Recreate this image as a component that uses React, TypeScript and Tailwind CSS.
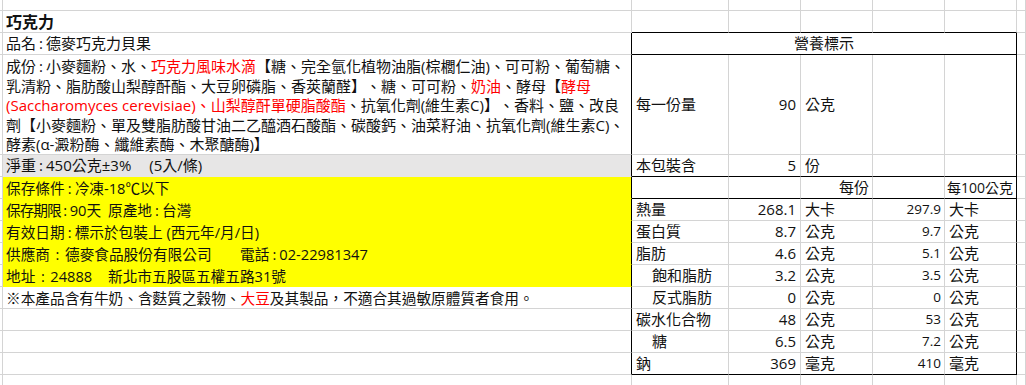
import React from "react";

const base =
  "border-r border-b border-[#d4d4d4] overflow-hidden whitespace-nowrap flex items-center";

const R = ({ children }: { children: React.ReactNode }) => (
  <span className="text-[#f00]">{children}</span>
);

/* narrow colon as rendered by the original font */
const C = () => <span className="inline-block w-[10px] text-center">:</span>;
/* full width colon */
const W = () => <span className="inline-block w-[15px] text-center">:</span>;

type Nut = [string, boolean, string, string, string, string];
const nutrients: Nut[] = [
  ["熱量", false, "268.1", "大卡", "297.9", "大卡"],
  ["蛋白質", false, "8.7", "公克", "9.7", "公克"],
  ["脂肪", false, "4.6", "公克", "5.1", "公克"],
  ["飽和脂肪", true, "3.2", "公克", "3.5", "公克"],
  ["反式脂肪", true, "0", "公克", "0", "公克"],
  ["碳水化合物", false, "48", "公克", "53", "公克"],
  ["糖", true, "6.5", "公克", "7.2", "公克"],
  ["鈉", false, "369", "毫克", "410", "毫克"],
];

const leftRows: { node: React.ReactNode; yellow: boolean }[] = [
  {
    node: (
      <>
        <span className="inline-block w-[102px]">
          <span className="tracking-[-1px]">保存期限</span>
          <span className="inline-block w-[9px] text-center">:</span>90天
        </span>
        原產地<C />台灣
      </>
    ),
    yellow: true,
  },
  {
    node: (
      <>
        有效日期<C />標示於包裝上 (西元年/月/日)
      </>
    ),
    yellow: true,
  },
  {
    node: (
      <>
        <span className="inline-block w-[234px]">
          供應商<W />德麥食品股份有限公司
        </span>
        電話<C />02-22981347
      </>
    ),
    yellow: true,
  },
  {
    node: (
      <>
        <span className="inline-block w-[102px]">
          地址<W />24888
        </span>
        新北市五股區五權五路31號
      </>
    ),
    yellow: true,
  },
  {
    node: (
      <>
        ※本產品含有牛奶、含麩質之穀物、<R>大豆</R>及其製品，不適合其過敏原體質者食用。
      </>
    ),
    yellow: false,
  },
  { node: null, yellow: false },
  { node: null, yellow: false },
  { node: null, yellow: false },
];

export default function App() {
  return (
    <div className="w-[1026px] h-[385px] overflow-hidden bg-white text-[#111] text-[15px] [text-spacing-trim:space-all] font-['Open_Sans','Noto_Sans_CJK_TC',sans-serif]">
      <div className="grid grid-cols-[3px_629px_97px_72px_72px_72px_72px_1fr] grid-rows-[11px_22px_22px_100px_repeat(11,22px)]">
        {/* Row 0 */}
        <div className={base} />
        <div className={base} />
        <div className={base} />
        <div className={base} />
        <div className={base} />
        <div className={base} />
        <div className={base} />
        <div className={base} />

        {/* Row 1 */}
        <div className={base} />
        <div className={`${base} pl-[3px] font-bold text-[16px]`}>巧克力</div>
        <div className={`${base} border-b-black`} />
        <div className={`${base} border-b-black`} />
        <div className={`${base} border-b-black`} />
        <div className={`${base} border-b-black`} />
        <div className={`${base} border-b-black`} />
        <div className={base} />

        {/* Row 2 */}
        <div className={base} />
        <div className={`${base} pl-[3px] border-r-black`}>
          品名<C />德麥巧克力貝果
        </div>
        <div
          className={`${base} col-span-5 justify-center border-b-black border-r-black`}
        >
          營養標示
        </div>
        <div className={base} />

        {/* Row 3 */}
        <div className={base} />
        <div
          className={`border-r border-b border-[#d4d4d4] border-r-black overflow-hidden whitespace-nowrap pl-[3px] pt-[2px] leading-[19.6px]`}
        >
          <div>
            成份<C />小麥麵粉、水、<R>巧克力風味水滴</R>【糖、完全氫化植物油脂(棕櫚仁油)、可可粉、葡萄糖、
          </div>
          <div>
            乳清粉、脂肪酸山梨醇酐酯、大豆卵磷脂、香莢蘭醛】、糖、可可粉、<R>奶油</R>、酵母【<R>酵母</R>
          </div>
          <div>
            <R>(Saccharomyces cerevisiae)、山梨醇酐單硬脂酸酯</R>、抗氧化劑(維生素C)】、香料、鹽、改良
          </div>
          <div>
            劑【小麥麵粉、單及雙脂肪酸甘油二乙醯酒石酸酯、碳酸鈣、油菜籽油、抗氧化劑(維生素C)、
          </div>
          <div>酵素(α-澱粉酶、纖維素酶、木聚醣酶)】</div>
        </div>
        <div className={`${base} pl-[4px]`}>每一份量</div>
        <div className={`${base} justify-end pr-[4px]`}>90</div>
        <div className={`${base} pl-[4px]`}>公克</div>
        <div className={base} />
        <div className={`${base} border-r-black`} />
        <div className={base} />

        {/* Row 4 */}
        <div className={base} />
        <div
          className={`${base} pl-[3px] bg-[#e7e6e6] border-b-[#e7e6e6] border-r-black`}
        >
          淨重<C />450公克±3%<span className="inline-block w-[18px]" />(5入/條)
        </div>
        <div className={`${base} pl-[4px] border-b-black`}>本包裝含</div>
        <div className={`${base} justify-end pr-[4px] border-b-black`}>5</div>
        <div className={`${base} pl-[4px] border-b-black`}>份</div>
        <div className={`${base} border-b-black`} />
        <div className={`${base} border-b-black border-r-black`} />
        <div className={base} />

        {/* Row 5 */}
        <div className={base} />
        <div
          className={`${base} pl-[3px] text-[14.67px] bg-[#ffff00] border-b-[#ffff00] border-r-black`}
        >
          保存條件<C />冷凍-18℃以下
        </div>
        <div className={`${base} border-b-black`} />
        <div className={`${base} border-b-black`} />
        <div className={`${base} justify-end pr-[3px] border-b-black`}>每份</div>
        <div className={`${base} border-b-black`} />
        <div
          className={`${base} justify-end pr-[3px] text-[14px] border-b-black border-r-black`}
        >
          每100公克
        </div>
        <div className={base} />

        {/* Nutrient rows */}
        {nutrients.map((n, i) => {
          const last = i === nutrients.length - 1;
          const left = leftRows[i];
          const bb = last ? "border-b-black" : "";
          return (
            <React.Fragment key={n[0]}>
              <div className={base} />
              <div
                className={`${base} pl-[3px] text-[14.67px] border-r-black ${
                  left.yellow ? "bg-[#ffff00] border-b-[#ffff00]" : ""
                }`}
              >
                {left.node}
              </div>
              <div className={`${base} ${bb} ${n[1] ? "pl-[20px]" : "pl-[4px]"}`}>
                {n[0]}
              </div>
              <div className={`${base} ${bb} justify-end pr-[4px]`}>{n[2]}</div>
              <div className={`${base} ${bb} pl-[4px]`}>{n[3]}</div>
              <div className={`${base} ${bb} justify-end pr-[3px] text-[13.5px]`}>
                {n[4]}
              </div>
              <div className={`${base} ${bb} pl-[4px] border-r-black`}>{n[5]}</div>
              <div className={base} />
            </React.Fragment>
          );
        })}

        {/* Row 14 */}
        <div className={base} />
        <div className={base} />
        <div className={base} />
        <div className={base} />
        <div className={base} />
        <div className={base} />
        <div className={base} />
        <div className={base} />
      </div>
    </div>
  );
}
